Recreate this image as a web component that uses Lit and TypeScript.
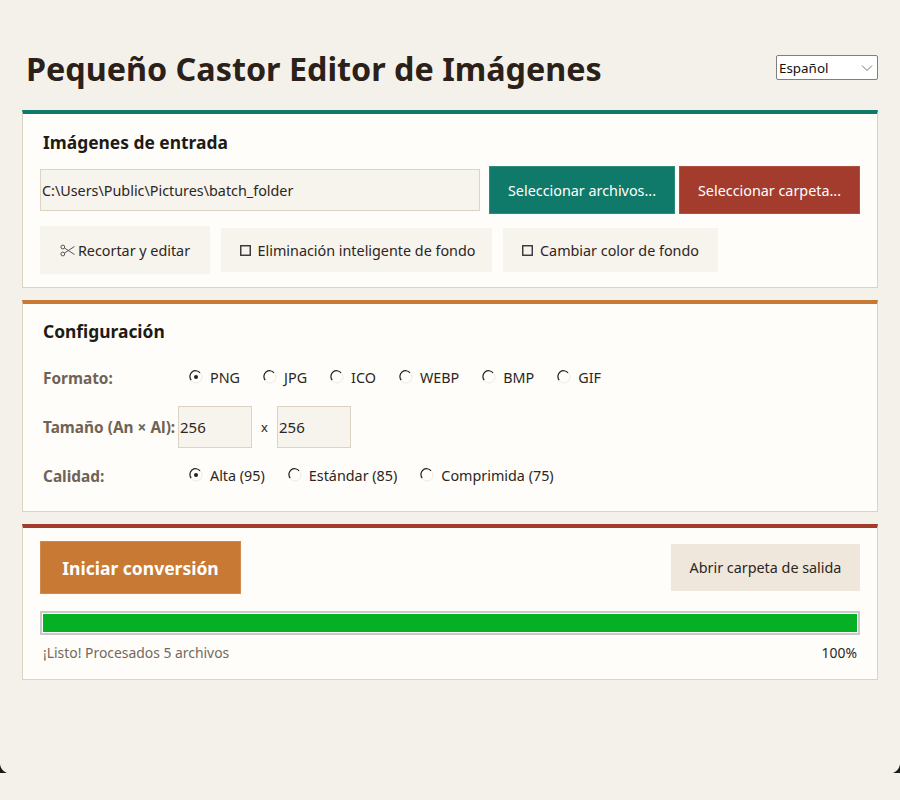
import { LitElement, html, css, svg } from "lit";
import { customElement } from "lit/decorators.js";

const radio = (on: boolean) => html`<svg class="radio" width="14" height="14" viewBox="0 0 14 14">
  <circle cx="7" cy="7" r="6" fill="#fffdf9" stroke="#efebe5" stroke-width="1"></circle>
  <path d="M2.2 10 A5.5 5.5 0 0 1 11 2.8" fill="none" stroke="#222" stroke-width="1.2"></path>
  ${on ? svg`<circle cx="7" cy="7" r="2" fill="#222"></circle>` : ""}
</svg>`;

const box = html`<svg class="box" width="11" height="11" viewBox="0 0 11 11"><rect x="0.75" y="0.75" width="9.5" height="9.5" fill="none" stroke="#333" stroke-width="1.4"></rect></svg>`;

@customElement("app-root")
export class AppRoot extends LitElement {
  static styles = css`
    :host {
      display: block;
      position: relative;
      height: 800px;
      box-sizing: border-box;
      padding: 0 22px;
      background: #f4f1eb;
      font-family: "Noto Sans", "Open Sans", sans-serif;
      color: #2b2622;
      font-size: 14.35px;
    }
    * { box-sizing: border-box; }
    .top {
      height: 110px;
      padding-top: 32px;
      display: flex;
      justify-content: space-between;
      align-items: flex-start;
    }
    h1 {
      margin: 0;
      padding-left: 4px;
      font-size: 32.3px;
      line-height: 72px;
      font-weight: 700;
      color: #2b2118;
    }
    .lang {
      width: 102px;
      height: 25px;
      margin-top: 23px;
      padding-left: 2px;
      display: flex;
      align-items: center;
      justify-content: space-between;
      background: #fff;
      border: 1px solid #7f7f7f;
      border-radius: 2px;
      font-size: 13.4px;
      color: #111;
    }
    .lang svg { margin-right: 4px; }
    .card {
      background: #fffdf9;
      border: 1px solid #ddd3c5;
      border-top: 4px solid #0f7a69;
      padding: 0 17px;
      margin-bottom: 12px;
    }
    .card.a { height: 178px; }
    .card.b { height: 212px; border-top-color: #c87a35; }
    .card.c { height: 156px; border-top-color: #a33c2d; }
    h2 {
      margin: 0;
      padding-left: 3px;
      font-size: 17.4px;
      line-height: 24px;
      font-weight: 700;
      color: #1e1a16;
    }
    .a h2 { padding-top: 16px; height: 52px; }
    .b h2 { padding-top: 15px; height: 52px; }
    .path-row { display: flex; align-items: center; height: 48px; }
    input {
      display: block;
      height: 42px;
      background: #f7f3ed;
      border: 1px solid #ddd3c5;
      font: inherit;
      color: #2b2622;
      padding: 0 1px;
      border-radius: 0;
      outline: none;
    }
    .path { width: 440px; margin-right: 9px; }
    button {
      font: inherit;
      border: 0;
      border-radius: 0;
      padding: 0;
      cursor: pointer;
      color: #2b2622;
    }
    .teal, .red {
      height: 48px;
      color: #fff;
    }
    .teal { width: 186px; background: #0f7a69; border: 1px solid #2e8a7b; margin-right: 4px; }
    .red { width: 181px; background: #a33c2d; border: 1px solid #b0513f; }
    .tools { display: flex; align-items: center; height: 48px; margin-top: 12px; }
    .tool {
      background: #f7f3ed;
      height: 44px;
      display: flex;
      align-items: center;
      justify-content: center;
    }
    .tool.crop { width: 170px; height: 48px; margin-right: 11px; }
    .tool.smart { width: 271px; margin-right: 11px; padding-left: 2px; }
    .tool.color { width: 215px; }
    .box { margin-right: 7px; }
    .scissors { margin-right: 3px; }
    .row { display: flex; align-items: center; height: 49px; }
    .label {
      width: 138px;
      flex: none;
      padding: 1px 0 0 3px;
      font-weight: 700;
      font-size: 15.4px;
      color: #6f6355;
      white-space: nowrap;
    }
    .opts { display: flex; align-items: center; padding-left: 11px; }
    .opt { display: flex; align-items: center; margin-right: 23px; }
    .radio { margin-right: 7px; margin-top: -1px; }
    .num { width: 74px; font-size: 15px; }
    .times { width: 25px; text-align: center; font-size: 13px; }
    .rows { margin-top: -3px; }
    .actions { display: flex; justify-content: space-between; align-items: center; height: 53px; margin-top: 13px; }
    .start {
      width: 201px;
      height: 53px;
      background: #c87a35;
      border: 1px solid #d08a4c;
      color: #fff;
      font-size: 17.5px;
      font-weight: 700;
    }
    .open { width: 189px; height: 47px; background: #efe7dc; }
    .progress {
      margin-top: 17px;
      height: 24px;
      border: 2px solid #c9c9c9;
      padding: 1px;
      background: #fff;
    }
    .fill { height: 100%; background: #06b025; }
    .status {
      display: flex;
      justify-content: space-between;
      padding: 0 3px;
      margin-top: 8px;
      font-size: 13.9px;
      line-height: 20px;
      color: #73695f;
    }
    .status b { font-weight: 400; color: #2b2622; }
    .corner { position: absolute; top: 764px; }
    .corner.l { left: 0; }
    .corner.r { right: 0; transform: scaleX(-1); }
  `;

  render() {
    return html`
      <div class="top">
        <h1>Pequeño Castor Editor de Imágenes</h1>
        <div class="lang">Español
          <svg width="12" height="8" viewBox="0 0 12 8"><path d="M1 1.5 L6 6.5 L11 1.5" fill="none" stroke="#777" stroke-width="1"></path></svg>
        </div>
      </div>

      <section class="card a">
        <h2>Imágenes de entrada</h2>
        <div class="path-row">
          <input class="path" .value=${"C:\\Users\\Public\\Pictures\\batch_folder"} />
          <button class="teal">Seleccionar archivos...</button>
          <button class="red">Seleccionar carpeta...</button>
        </div>
        <div class="tools">
          <button class="tool crop">
            <svg class="scissors" width="15" height="13" viewBox="0 0 15 13" fill="none" stroke="#555" stroke-width="1">
              <circle cx="2.8" cy="3" r="1.9"></circle><circle cx="2.8" cy="10" r="1.9"></circle>
              <path d="M4.5 4 L14.5 10.5 M4.5 9 L14.5 2.5"></path>
            </svg>Recortar y editar
          </button>
          <button class="tool smart">${box}Eliminación inteligente de fondo</button>
          <button class="tool color">${box}Cambiar color de fondo</button>
        </div>
      </section>

      <section class="card b">
        <h2>Configuración</h2>
        <div class="rows">
          <div class="row">
            <div class="label">Formato:</div>
            <div class="opts">
              ${["PNG", "JPG", "ICO", "WEBP", "BMP", "GIF"].map((f, i) => html`<span class="opt">${radio(i === 0)}${f}</span>`)}
            </div>
          </div>
          <div class="row">
            <div class="label">Tamaño (An × Al):</div>
            <input class="num" value="256" />
            <span class="times">x</span>
            <input class="num" value="256" />
          </div>
          <div class="row">
            <div class="label">Calidad:</div>
            <div class="opts">
              ${["Alta (95)", "Estándar (85)", "Comprimida (75)"].map((f, i) => html`<span class="opt">${radio(i === 0)}${f}</span>`)}
            </div>
          </div>
        </div>
      </section>

      <section class="card c">
        <div class="actions">
          <button class="start">Iniciar conversión</button>
          <button class="open">Abrir carpeta de salida</button>
        </div>
        <div class="progress"><div class="fill"></div></div>
        <div class="status"><span>¡Listo! Procesados 5 archivos</span><b>100%</b></div>
      </section>

      <svg class="corner l" width="8" height="10" viewBox="0 0 8 10"><path d="M0 0 C0.5 4 3 7.5 7 9 L0 9 Z" fill="#1a1a1a"></path></svg>
      <svg class="corner r" width="8" height="10" viewBox="0 0 8 10"><path d="M0 0 C0.5 4 3 7.5 7 9 L0 9 Z" fill="#1a1a1a"></path></svg>
    `;
  }
}
